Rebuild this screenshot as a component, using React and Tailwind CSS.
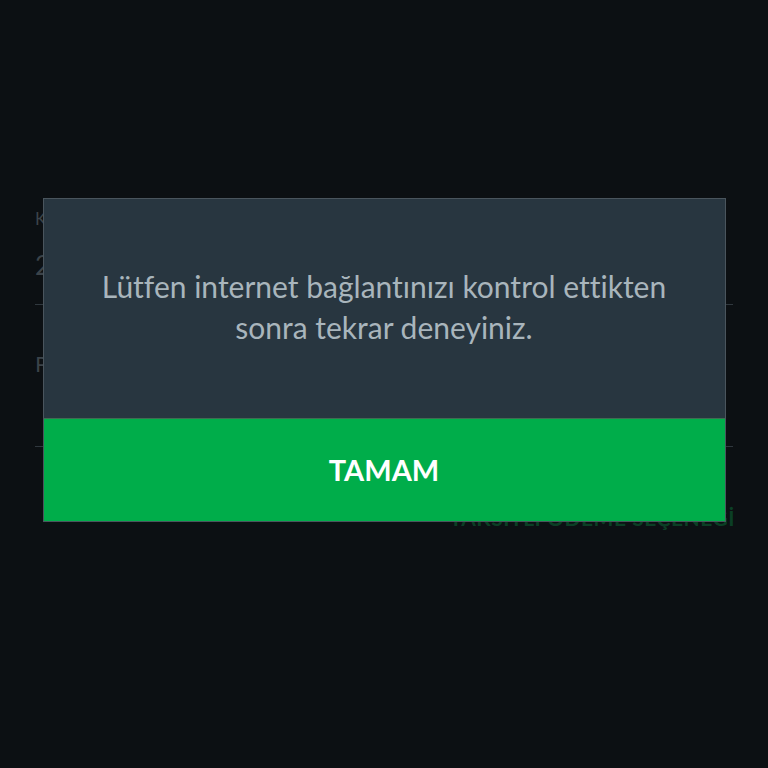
import React from 'react';

function PaymentForm() {
  return (
    <div className="flex flex-col px-[35px] pt-[208px] text-[#3b4349]" aria-hidden="true">
      <span className="text-[17px] leading-[22px]">Kart Numarası</span>
      <span className="mt-[20px] text-[26px] leading-[30px]">2456 •••• •••• 1122</span>
      <div className="mt-[24px] h-px bg-[#30383e]" />
      <span className="mt-[46px] text-[22px] leading-[26px]">Peşin Fiyatına</span>
      <div className="mt-[69px] h-px bg-[#30383e]" />
      <div className="mt-[58px] flex justify-end">
        <span className="text-[21px] font-bold tracking-wide text-[#0b3f25] leading-[26px] -mr-[2px]">
          TAKSİTLİ ÖDEME SEÇENEĞİ
        </span>
      </div>
    </div>
  );
}

export default function App() {
  return (
    <div
      className="relative h-[768px] w-[768px] overflow-hidden bg-[#0c1013] [font-variant-ligatures:none]"
      style={{ fontFamily: 'Lato, "Open Sans", sans-serif' }}
    >
      <PaymentForm />

      <div className="absolute inset-0 flex justify-center pt-[198px]">
        <div className="flex h-[324px] w-[683px] flex-col border border-[#4a555d] bg-[#283640]">
          <div className="flex flex-1 items-center justify-center pb-[4px]">
            <p className="text-center text-[30px] leading-[41px] text-[#a9b5bc]">
              Lütfen internet bağlantınızı kontrol ettikten
              <br />
              sonra tekrar deneyiniz.
            </p>
          </div>
          <button className="flex h-[103px] items-center justify-center border-t border-[#3f6d52] bg-[#00ad4a] text-[29px] font-bold text-white">
            TAMAM
          </button>
        </div>
      </div>
    </div>
  );
}
